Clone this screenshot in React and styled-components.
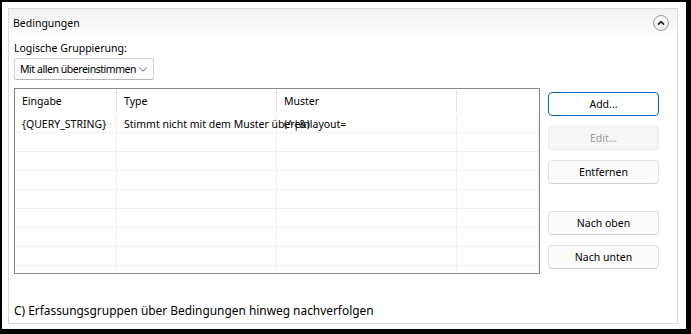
import React from "react";
import styled, { createGlobalStyle } from "styled-components";

const GlobalStyle = createGlobalStyle`
  html, body { margin: 0; padding: 0; background: #000; }
  body { font-family: "Noto Sans", "Open Sans", sans-serif; color: #000; }
  * { box-sizing: border-box; }
`;

const Frame = styled.div`
  width: 691px;
  height: 334px;
  padding: 2px 5px 5px 2px;
  background: #000;
`;

const Panel = styled.div`
  width: 100%;
  height: 100%;
  background: #fff;
  padding: 6px 8px 5px 6px;
`;

const Group = styled.section`
  height: 100%;
  border: 1px solid #dadada;
  display: flex;
  flex-direction: column;
`;

const GroupHeader = styled.header`
  height: 28px;
  flex: none;
  display: flex;
  align-items: center;
  justify-content: space-between;
  padding: 0 8px 0 4px;
  background: linear-gradient(#f2f2f2, #f6f6f6 40%, #ffffff);
  font-size: 10.5px;
`;

const Collapse = styled.button`
  width: 16px;
  height: 16px;
  padding: 0;
  border-radius: 50%;
  border: 1px solid #9a9a9a;
  background: radial-gradient(circle at 50% 35%, #ffffff, #e4e4e4);
  display: flex;
  align-items: center;
  justify-content: center;
`;

const GroupBody = styled.div`
  flex: 1;
  display: flex;
  flex-direction: column;
  padding: 3px 5px 0 5px;
  font-size: 10.5px;
`;

const Label = styled.div`
  line-height: 16px;
  height: 16px;
`;

const Select = styled.div`
  margin-top: 2px;
  width: 140px;
  height: 22px;
  border: 1px solid #d4d4d4;
  border-bottom-color: #b8b8b8;
  border-radius: 3px;
  background: #fdfdfd;
  display: flex;
  align-items: center;
  justify-content: space-between;
  padding: 0 6px 0 5px;
  white-space: nowrap;
  letter-spacing: -0.45px;
`;

const Content = styled.div`
  margin-top: 8px;
  display: flex;
  align-items: flex-start;
  gap: 8px;
`;

const Table = styled.div`
  width: 526px;
  height: 186px;
  border: 1px solid #85888d;
  overflow: hidden;
  background: #fff;
`;

const Row = styled.div`
  display: grid;
  grid-template-columns: 102px 160px 180px 1fr;
  height: ${(p) => (p.$head ? 25 : 19)}px;
`;

const HeadCell = styled.div`
  border-right: 1px solid #e3e3e3;
  padding: 0 7px;
  margin: 1px 0 2px;
  display: flex;
  align-items: center;
  white-space: nowrap;
  &:last-child { border-right: none; }
`;

const Cell = styled.div`
  border-right: 1px solid #efefef;
  border-bottom: 1px solid #efefef;
  padding: 2px 7px 0;
  display: flex;
  align-items: center;
  white-space: nowrap;
  overflow: visible;
`;

const ButtonColumn = styled.div`
  margin-top: 4px;
  display: flex;
  flex-direction: column;
  gap: 10px;
`;

const Button = styled.button`
  width: 111px;
  height: 24px;
  border-radius: 4px;
  font-family: inherit;
  font-size: 10.5px;
  padding: 0;
  color: ${(p) => (p.disabled ? "#9a9a9a" : "#000")};
  background: ${(p) => (p.$primary ? "#ffffff" : p.disabled ? "#f6f6f6" : "#fbfbfb")};
  border: 1px solid ${(p) => (p.$primary ? "#0067c0" : p.disabled ? "#ebebeb" : "#e3e3e3")};
  border-bottom-color: ${(p) => (p.$primary ? "#0067c0" : p.disabled ? "#ebebeb" : "#d0d0d0")};
`;

const Spacer = styled.div`
  height: 7px;
`;

const Footer = styled.div`
  margin-top: auto;
  margin-bottom: 4px;
  font-size: 11.9px;
  line-height: 18px;
`;

const columns = ["Eingabe", "Type", "Muster", ""];

export default function App() {
  const emptyRows = Array.from({ length: 8 });
  return (
    <>
      <GlobalStyle />
      <Frame>
        <Panel>
          <Group>
            <GroupHeader>
              <span>Bedingungen</span>
              <Collapse aria-label="Einklappen">
                <svg width="8" height="6" viewBox="0 0 8 6">
                  <path d="M1 4.6 L4 1.6 L7 4.6" fill="none" stroke="#1a1a1a" strokeWidth="1.6" />
                </svg>
              </Collapse>
            </GroupHeader>
            <GroupBody>
              <Label>Logische Gruppierung:</Label>
              <Select>
                <span>Mit allen übereinstimmen</span>
                <svg width="8" height="5" viewBox="0 0 8 5">
                  <path d="M0.5 0.8 L4 4.2 L7.5 0.8" fill="none" stroke="#555" strokeWidth="0.9" />
                </svg>
              </Select>
              <Content>
                <Table>
                  <Row $head>
                    {columns.map((c, i) => (
                      <HeadCell key={i}>{c}</HeadCell>
                    ))}
                  </Row>
                  <Row>
                    <Cell>{"{QUERY_STRING}"}</Cell>
                    <Cell>Stimmt nicht mit dem Muster überein</Cell>
                    <Cell>(^|&amp;)layout=</Cell>
                    <Cell />
                  </Row>
                  {emptyRows.map((_, r) => (
                    <Row key={r}>
                      <Cell />
                      <Cell />
                      <Cell />
                      <Cell />
                    </Row>
                  ))}
                </Table>
                <ButtonColumn>
                  <Button $primary>Add...</Button>
                  <Button disabled>Edit...</Button>
                  <Button>Entfernen</Button>
                  <Spacer />
                  <Button>Nach oben</Button>
                  <Button>Nach unten</Button>
                </ButtonColumn>
              </Content>
              <Footer>C) Erfassungsgruppen über Bedingungen hinweg nachverfolgen</Footer>
            </GroupBody>
          </Group>
        </Panel>
      </Frame>
    </>
  );
}
